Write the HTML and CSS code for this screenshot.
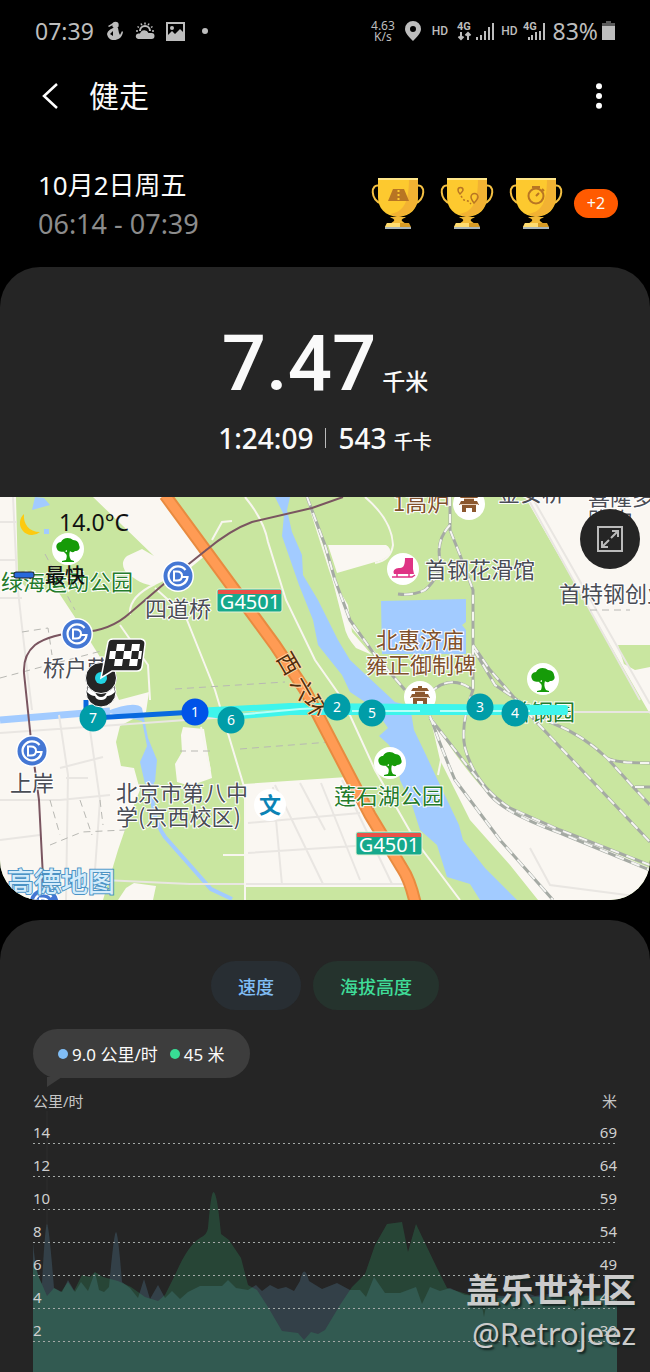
FILE: index.html
```html
<!DOCTYPE html>
<html lang="zh-CN">
<head>
<meta charset="utf-8">
<meta name="viewport" content="width=device-width, initial-scale=1">
<title>健走</title>
<link rel="stylesheet" href="styles.css">
</head>
<body>
<div class="status">
  <span class="status-time">07:39</span>
  <svg class="status-figure" width="18" height="20" viewBox="0 0 18 20" fill="currentColor"><circle cx="9.500" cy="4" r="3.200"/><path d="M2 5l5-3v2L3 6z"/><path d="M7 7l5 0 1 5 1 2 2-4 1 1c-1 6-5 8-9 8S2 17 1 13c1-3 2-4 6-6zM4 13l3 2V10z" fill-rule="evenodd"/></svg>
  <svg class="status-sun" width="20" height="18" viewBox="0 0 20 18" fill="currentColor"><path d="M3 17a2.800 2.800 0 0 1 0-5.500h2a4.500 4.500 0 0 1 8.500-.5h3a3 3 0 0 1 0 6z"/><path d="M5 9a5 5 0 0 1 10 0" fill="none" stroke="currentColor" stroke-width="2"/><path d="M1 9h2M2.500 4.500l1.500 1M6 1.500l.8 1.800M10 .5v2M14 1.500l-.8 1.800M17.500 4.500l-1.500 1M19 9h-2" stroke="currentColor" stroke-width="1.500"/></svg>
  <svg class="status-photo" width="19" height="19" viewBox="0 0 19 19"><rect x="1" y="1" width="17" height="17" fill="none" stroke="currentColor" stroke-width="2"/><circle cx="6" cy="6" r="2" fill="currentColor"/><path d="M2 17v-4l4-4 3 3 5-5 4 4v7z" fill="currentColor"/></svg>
  <span class="status-dot"></span>
  <span class="status-rate">4.63<br>K/s</span>
  <svg class="status-pin" width="16" height="20" viewBox="0 0 16 20"><path d="M8 0a8 8 0 0 1 8 8c0 4-4 8-8 12C4 16 0 12 0 8a8 8 0 0 1 8-8zm0 5a3 3 0 1 0 0 6 3 3 0 0 0 0-6z" fill="currentColor"/></svg>
  <span class="status-hd">HD</span>
  <svg class="status-signal" width="37" height="20" viewBox="0 0 37 20"><text x="0" y="9" class="net">4G</text><path d="M4 11v7M1.500 15.500L4 18l2.500-2.500M11 19v-7M8.500 14.500L11 12l2.500 2.500" class="arrows"/><path d="M20 19v-3M24 19v-5M28 19v-9M32 19V6M36 19V2" class="bars"/></svg>
  <span class="status-hd status-hd-second">HD</span>
  <svg class="status-signal status-signal-second" width="22" height="20" viewBox="0 0 22 20"><text x="0" y="9" class="net">4G</text><path d="M6 19v-3M9 19v-5M13 19v-8M17 19v-9M21 19V2" class="bars"/></svg>
  <span class="status-battery-text">83%</span>
  <svg width="13" height="20" viewBox="0 0 13 20"><path d="M4 0h5v2h4v4H0V2h4z" fill="#5a5a5a"/><path d="M0 5h13v14H0z" fill="currentColor"/></svg>
</div>

<header class="titlebar">
  <button class="icon-button" aria-label="返回"><svg width="18" height="26" viewBox="0 0 18 26"><path d="M16 1L3 13l13 12" fill="none" stroke="#fff" stroke-width="2.500"/></svg></button>
  <h1>健走</h1>
  <button class="icon-button more" aria-label="更多"><svg width="8" height="26" viewBox="0 0 8 26" fill="#fff"><circle cx="4" cy="3.200" r="3"/><circle cx="4" cy="13" r="3"/><circle cx="4" cy="22.800" r="3"/></svg></button>
</header>

<svg width="0" height="0" class="defs" aria-hidden="true">
  <defs>
    <g id="cup">
      <path d="M9 9C-1 5-1 24 11 27M45 9c10-4 10 15-2 18" fill="none" stroke="#f4c043" stroke-width="2"/>
      <path d="M7 1h40v19c0 12-8 19-20 20C14 39 7 31 7 20z" fill="#fdc92f"/>
      <path d="M38 1h9v18c0 12-8 19-20 21-3-1-6-2-8-3 14-2 19-12 19-36z" fill="#f2b233"/>
      <path d="M7 1h40v2H7z" fill="#ffe68a"/>
      <path d="M19 40h16c-3 2-5 2-4 4l4 3H19l4-3c1-2-1-2-4-4z" fill="#f2b936"/>
      <path d="M16 46h22l2 4H14z" fill="#d79b25"/><path d="M16 46h13v4H14z" fill="#ffdc70"/><path d="M14 50h26v2H14z" fill="#a9b5ba"/>
    </g>
    <g id="metro"><circle r="16" fill="#fff"/><circle r="14.500" fill="#4477d4"/><path d="M7.500-6A9.500 9.500 0 1 0 9.500 1H4" fill="none" stroke="#fff" stroke-width="2.200"/><path d="M-4-4.500v9h3q5 0 5-4.500t-5-4.500z" fill="none" stroke="#fff" stroke-width="2"/></g>
    <g id="tree"><circle r="16" fill="#fff"/><path d="M-11 0c-2-4 1-7 4-7 2-5 9-5 12-2 4 0 6 3 6 5 2 4-1 6-4 6-2 2-4 1-5 0-1 3-1 6 1 9l3 1v1H-6v-1l4-1c1-3 1-5 0-6l-4-4 5 2V1c-4 3-9 2-10-1z" fill="#169b08"/></g>
    <g id="pagoda"><circle r="16" fill="#fff"/><path d="M-2-11h4v2h5l2 3H-9l2-3h5zM-5-6H5v3H-5zM-8-3H8l2 4H-10zM-7 1H7v7H3V4H-3v4H-7z" fill="#8b572e"/><path d="M-5-5.500H5M-9 .5H9" stroke="#e5cdb8" stroke-width="1"/></g>
  </defs>
</svg>

<section class="session">
  <div class="session-when">
    <p class="session-date">10月2日周五</p>
    <p class="session-span">06:14 - 07:39</p>
  </div>
  <div class="awards">
    <svg width="54" height="52" viewBox="0 0 54 52"><use href="#cup"/><path d="M22 12h11l5 12H17z" fill="#b87523"/><path d="M27.500 13v2M27.500 17v2M27.500 21v2" stroke="#fdc92f" stroke-width="2"/></svg>
    <svg width="54" height="52" viewBox="0 0 54 52"><use href="#cup"/><g fill="none" stroke="#b87523" stroke-width="1.500"><path d="M20 17c-2-2-2-3-2-4a2 2 0 0 1 5 0c0 1-1 2-3 4zM34 26c-3-4-3-5-3-6a3 3 0 0 1 7 0c0 1-1 3-4 6z"/><path d="M21 19l3 4 4 1 3 3" stroke-dasharray="2 2"/></g></svg>
    <svg width="54" height="52" viewBox="0 0 54 52"><use href="#cup"/><g fill="none" stroke="#b87523" stroke-width="2"><circle cx="27" cy="19" r="7.500"/><path d="M23 10h8M27 10v2M27 19l3-3M33 12l2 2"/></g></svg>
    <button class="awards-more">+2</button>
  </div>
</section>

<main>
<section class="card route">
  <div class="totals">
    <p class="distance"><span class="distance-value">7.47</span><span class="distance-unit">千米</span></p>
    <p class="effort"><span>1:24:09</span><span class="effort-rule"></span><span>543 <small>千卡</small></span></p>
  </div>
  <div class="map">
    <svg class="map-art" viewBox="0 497 650 403" role="img" aria-label="健走路线地图">
      <rect y="497" width="650" height="403" fill="#c9e6a0"/>
      <g class="land">
        <path d="M0 497H16L18 578 28 590H57L80 625 100 657 119 700 149 692 146 712 120 726 116 742 121 766 134 768 140 790 130 815 118 850 103 900H0z"/>
        <path d="M93 497H165L206 555 189 569 155 585Q143 587 125 571 120 562 127 556L142 549 154 556z"/>
        <path d="M328 545H386Q391 547 390 555L382 560 337 573zM332 578L348 605 352 632 372 655 356 648Q346 637 344 625z"/>
        <path d="M525 497H650V645L618 645 624 664 635 670 650 667V714z"/>
        <path d="M430 716Q470 780 500 805L560 830 650 868V900H538L510 865 470 820 440 760z"/>
        <path d="M244 784L347 777 407 887H244z"/>
        <path d="M183 727L204 729 212 778 190 786 177 782 175 764 182 752 181 735z"/>
        <path d="M126 888l8-5 22 3-3 14h-35z"/>
      </g>
      <g class="water">
        <path d="M275 497H290L287 510 292 532 302 555 303 575 318 600 338 640 350 660 395 702 410 706 414 730 426 755 440 785 459 825 463 840 485 868 517 900H480L470 884 447 877 437 845 420 830 412 805 400 780 397 755 388 744 379 736 388 728 374 708 350 692 342 675 318 645 313 620 299 585 282 536 284 515z"/>
        <path d="M381 601L466 599V622l-4 3 4 5V654H382z"/>
        <path d="M105 712Q135 700 142 708L148 738 157 760 155 782 145 784 140 762 147 746 142 721z"/>
        <path d="M35 497L44 498 50 505 32 510zM44 529h5v5h-5z"/>
      </g>
      <path class="stream" d="M0 720L110 711"/>
      <path class="stream thin" d="M152 780Q150 816 165 837L211 889 232 899"/>
      <g class="road faint">
        <path d="M0 522H17M0 560H17M0 598H22M13 497L17 580Q22 630 32 710M0 733L130 724 300 712M59 715L68 775 66 900M90 730L100 800 95 870M0 800H60L110 795M0 840L40 835M60 768L103 757M66 778H88M248 823L360 813M248 853L370 845M245 884H405M275 785L323 884M300 783L325 830M321 783L360 880M342 780L392 884M273 787L282 885"/>
        <path d="M103 880L190 884H245M527 497L640 700M532 497L650 704M565 712H650M530 848L550 885 650 898"/>
      </g>
      <g class="road">
        <path d="M245 497Q264 520 268 542L286 600 315 660 343 700 375 770 415 840 460 900M155 588L185 615 215 690 245 790V900M120 625L148 665 150 700M130 615Q128 597 155 584M212 540L222 522 232 521M365 497Q392 520 393 545 391 560 375 563M223 855H248M201 727L210 770M307 497L330 570 348 622 372 650 405 690M430 716L445 740 438 775"/>
      </g>
      <g class="track">
        <path d="M45 554L75 610M0 678L105 650M22 632L48 628 52 655M175 689L285 682M210 751H180M240 749L330 742M50 800L60 835M80 800L92 835M50 845L82 832 125 830M100 800L103 825M590 610H630"/>
      </g>
      <g class="rail-base">
        <path id="r1" d="M307 497L325 545 335 580 350 620 375 655 405 690"/>
        <path id="r2" d="M450 497L450 530 460 555 473 590V690Q460 725 465 748 475 785 510 808L560 830 650 865"/>
        <path id="r3" d="M473 645L490 670 525 710 650 842"/>
        <path id="r4" d="M474 650L495 685 550 722Q583 735 607 758L635 789 650 805M607 758Q615 763 650 763M635 787H650"/>
        <path id="r5" d="M430 718L455 750 490 795Q505 813 560 833L650 870"/>
        <path id="r6" d="M430 716Q442 750 455 780L500 840 553 900M430 693Q450 673 473 690M450 525Q436 540 440 560 440 577 425 590 412 596 398 594"/>
      </g>
      <g class="rail-dash"><use href="#r1"/><use href="#r2"/><use href="#r3"/><use href="#r4"/><use href="#r5"/><use href="#r6"/></g>
      <path class="highway-edge" d="M165 495L275 645 305 690 370 815 402 868Q410 880 415 902"/>
      <path class="highway" d="M165 495L275 645 305 690 370 815 402 868Q410 880 415 902"/>
      <path class="metro-line" d="M343 497L312 508 252 522Q230 530 205 551L165 583 130 613Q110 631 82 632 50 634 35 645 23 655 24 673L31 740 39 800 44 897"/>

      <g class="shield"><rect x="217" y="589" width="65" height="23" rx="2"/><path d="M218 590h63v4h-63z"/><text x="250" y="609">G4501</text></g>
      <g class="shield"><rect x="356" y="832" width="66" height="23" rx="2"/><path d="M357 833h64v4h-64z"/><text x="389" y="852">G4501</text></g>

      <g class="label">
        <text x="145" y="617">四道桥</text><text x="43" y="676">桥户营</text><text x="10" y="791">上岸</text>
        <text x="425" y="578">首钢花滑馆</text><text x="559" y="602">首特钢创业</text>
        <text x="116" y="801">北京市第八中</text><text x="116" y="825">学(京西校区)</text>
        <text x="498" y="501">金安桥</text><text x="588" y="505">喜隆多</text><text x="588" y="528">购物</text>
      </g>
      <g class="label green"><text x="1" y="590">绿海运动公园</text><text x="334" y="804">莲石湖公园</text><text x="509" y="720">首钢园</text></g>
      <g class="label brown"><text x="393" y="511">1高炉</text><text x="376" y="648">北惠济庙</text><text x="366" y="673">雍正御制碑</text></g>
      <use href="#metro" x="178" y="576"/><use href="#metro" x="77" y="634"/><use href="#metro" x="32" y="751"/><use href="#metro" x="44" y="903"/>
      <use href="#tree" x="68" y="549"/><use href="#tree" x="543" y="679"/><use href="#tree" x="390" y="763"/>
      <use href="#pagoda" x="469" y="504"/><use href="#pagoda" x="420" y="697"/>
      <circle cx="403" cy="569" r="16" fill="#fff"/><path d="M405 558h8v11l1 5h-20c-2-5 3-6 6-6 4 0 5-4 5-10z" fill="#df3385"/><path d="M392 577h20l3-2M397 574v3M409 574v3" fill="none" stroke="#df3385" stroke-width="1.500"/>
      <circle cx="270" cy="805" r="16" fill="#fff"/><text class="school" x="270" y="813">文</text>
      <text class="brand" x="7" y="892">高德地图</text>

      <path class="path-blue" d="M86 700V716M93 718L195 712"/>
      <path class="path-cyan" d="M195 712L230 717 290 712H565"/><path class="path-cyan" d="M195 711L290 706 565 708"/>
      <path class="path-glow" d="M236 715L300 709 340 707M352 711H420M440 711H530"/>
      <g class="label road-name"><text transform="translate(276 658) rotate(60)">西</text><text transform="translate(290 683) rotate(60)">六</text><text transform="translate(303 701) rotate(60)">环</text></g>
      <g class="km">
        <circle cx="93" cy="718" r="13.500"/><text x="93" y="723">7</text>
        <circle class="first" cx="195" cy="712" r="13.500"/><text x="195" y="717">1</text>
        <circle cx="231" cy="720" r="13.500"/><text x="231" y="725">6</text>
        <circle cx="337" cy="707" r="13.500"/><text x="337" y="712">2</text>
        <circle cx="372" cy="713" r="13.500"/><text x="372" y="718">5</text>
        <circle cx="480" cy="707" r="13.500"/><text x="480" y="712">3</text>
        <circle cx="515" cy="713" r="13.500"/><text x="515" y="718">4</text>
      </g>
      <circle cx="101" cy="692" r="15" fill="#252525" stroke="#fff"/><path d="M88 687q13 12 26 0l1 5q-4 4-8 4-1 4-6 4t-6-4q-4 0-8-4z" fill="#fff"/><path d="M95 692h12q-2 5-6 5t-6-5z" fill="#252525"/>
      <circle cx="101" cy="678" r="15.500" fill="#252525" stroke="#fff"/>
      <circle cx="101" cy="678" r="6" fill="#22d3e2"/>
      <path d="M101 678L108 642Q109 639 113 639H141Q146 640 145 645L142 667Q141 671 137 671H112z" fill="#252525" stroke="#fff" stroke-width="1.500"/>
      <path d="M117 644h8l-1 7h-8zM132 644h8l-1 7h-8zM124 651h8l-1 8h-8zM110 651h6l-1 8h-6zM139 651h3l-1 8h-3zM115 659h8l-1 7h-8zM130 659h8l-1 7h-8z" fill="#fff"/>
      <rect x="14" y="572" width="20" height="6" rx="2" fill="#2869dc" stroke="#222"/>
      <text class="fastest" x="45" y="583">最快</text>
      <path d="M24 514a12 12 0 1 0 16 18C29 532 23 524 24 514z" fill="#fdca10"/>
      <text class="temp" x="59" y="531">14.0°C</text>
    </svg>
    <button class="map-expand" aria-label="展开地图"><svg width="28" height="28" viewBox="0 0 28 28" fill="none" stroke="#bbb" stroke-width="2"><path d="M2 2h24v24H2z"/><path d="M15 13l7-7M16 6h6v6M13 15l-7 7M6 16v6h6"/></svg></button>
  </div>
</section>

<section class="card chart-card">
  <div class="series">
    <button class="series-speed">速度</button>
    <button class="series-height">海拔高度</button>
  </div>
  <div class="bubble"><span class="dot dot-speed"></span>9.0 公里/时<span class="dot dot-height"></span>45 米</div>
  <div class="axis-units"><span>公里/时</span><span>米</span></div>
  <div class="plot">
    <svg class="plot-areas" viewBox="33 1111 584 261" preserveAspectRatio="none" aria-hidden="true">
      <path d="M47 1111V1226" stroke="#2f2f2f" stroke-width="1"/>
      <path class="area-speed" d="M33 1243Q36 1275 42 1284 45 1225 47 1224 49 1225 54 1288L62 1292 68 1280 75 1292 81 1282 88 1291 95 1272 99 1290 104 1292 109 1287Q114 1232 116 1232 118 1232 122 1282L130 1288 138 1298 144 1279 150 1299 158 1285 165 1298 172 1291 180 1299 188 1292 200 1286 222 1286 228 1280 236 1288 248 1290 256 1285 262 1291 270 1285 278 1289 286 1287 294 1291 300 1281Q304 1262 309 1281L322 1289 337 1283 350 1290H360L366 1297 374 1277 385 1293 400 1293 416 1287 422 1304 430 1287 440 1291 450 1288 465 1295 480 1296 484 1317 488 1295 505 1296 520 1290 535 1296 555 1293 575 1311 590 1297 617 1295V1372H33z"/>
      <path class="area-height" d="M33 1260L38 1275 47 1296 54 1288 61 1292 68 1282 74 1291 82 1275 90 1277 95 1272 103 1277 118 1281 131 1287 145 1297 158 1301 165 1295 175 1275Q188 1245 200 1238 207 1235 208 1228 211 1192 213.500 1192 217 1192 221 1234L229 1240 241 1258 248 1285 257 1290 268 1307 282 1331 298 1333 304 1340 311 1332 318 1334 325 1330 340 1305 352 1287 365 1274 375 1245 387 1224 402 1222 408 1252 416 1224 425 1243 437 1268 447 1288 470 1295 490 1298 617 1295V1372H33z"/>
    </svg>
    <div class="grid-row"><span>14</span><span>69</span></div>
    <div class="grid-row"><span>12</span><span>64</span></div>
    <div class="grid-row"><span>10</span><span>59</span></div>
    <div class="grid-row"><span>8</span><span>54</span></div>
    <div class="grid-row"><span>6</span><span>49</span></div>
    <div class="grid-row"><span>4</span><span>44</span></div>
    <div class="grid-row"><span>2</span><span>39</span></div>
  </div>
  <div class="watermark"><strong>盖乐世社区</strong><span>@Retrojeez</span></div>
</section>
</main>
</body>
</html>
```
FILE: styles.css
```css
* { box-sizing: border-box; }
body { margin: 0; background: #000; color: #fafafa; font-family: "Noto Sans", "Noto Sans CJK SC", sans-serif; }
p, h1 { margin: 0; font-weight: 400; }
button { border: 0; padding: 0; font: inherit; color: inherit; background: none; }
svg { flex: none; }
.defs { position: absolute; }

.status { display: flex; align-items: center; height: 62px; padding: 0 35px; color: #bdbdbd; white-space: nowrap; }
.status-time { font-size: 23px; }
.status-figure { margin-left: 12px; }
.status-sun { margin-left: 11px; }
.status-photo { margin-left: 11px; }
.status-dot { width: 6px; height: 6px; margin-left: 17px; border-radius: 50%; background: currentColor; }
.status-rate { margin-left: auto; font-size: 12px; line-height: 11px; text-align: center; }
.status-pin { margin-left: 10px; }
.status-hd { margin-left: 11px; font: 500 12px Roboto, sans-serif; }
.status-signal { margin-left: 9px; overflow: visible; }
.status-hd-second { margin-left: 7px; }
.status-signal-second { margin-left: 5px; }
.net { font: 700 11px Roboto, sans-serif; fill: currentColor; }
.arrows { fill: none; stroke: currentColor; stroke-width: 2; }
.bars { stroke: currentColor; stroke-width: 2; }
.status-battery-text { margin: 0 4px 0 8px; font-size: 23px; }

.titlebar { display: flex; align-items: center; height: 68px; padding: 0 47px 0 41px; }
.titlebar h1 { margin-left: 30px; font-size: 30px; line-height: 40px; }
.icon-button { display: flex; }
.more { margin-left: auto; }

.session { display: flex; justify-content: space-between; align-items: flex-start; padding: 35px 32px 24px 38px; }
.session-date { font-size: 26px; line-height: 40px; }
.session-span { font-size: 27px; line-height: 38px; color: #8c8c8c; }
.awards { display: flex; align-items: center; gap: 15px; padding-top: 12px; }
.awards-more { width: 44px; height: 29px; margin-left: -4px; border-radius: 15px; background: #ff5a00; font-size: 16px; line-height: 29px; }

.card { background: #252525; overflow: hidden; }
.route { border-radius: 40px; }
.totals { padding-top: 52px; text-align: center; }
.distance { display: flex; justify-content: center; align-items: baseline; gap: 6px; height: 96px; }
.distance-value { font: 500 78px/90px Roboto, sans-serif; }
.distance-unit { font-size: 23px; font-weight: 500; line-height: 30px; }
.effort { display: flex; justify-content: center; align-items: center; height: 82px; padding-bottom: 36px; font-size: 28px; font-weight: 500; }
.effort-rule { width: 1px; height: 20px; margin: 0 12px; background: #bbb; }
.effort small { font-size: 19px; }

.map { position: relative; }
.map-art { display: block; width: 100%; height: auto; }
.map-expand { position: absolute; top: 12px; right: 10px; display: flex; align-items: center; justify-content: center; width: 60px; height: 60px; border-radius: 50%; background: #252525; }
.land { fill: #faf7f2; }
.water { fill: #a2cbff; }
.stream { fill: none; stroke: #a2cbff; stroke-width: 7; }
.thin { stroke-width: 4; }
.road { fill: none; stroke: #f8f6ef; stroke-width: 2; }
.faint { stroke: #e9e6e2; stroke-width: 2; }
.track { fill: none; stroke: #b8b8b3; stroke-width: 1; stroke-dasharray: 7 5; }
.rail-base { fill: none; stroke: #a5aaa4; stroke-width: 3; }
.rail-dash { fill: none; stroke: #f5f5f2; stroke-width: 2; stroke-dasharray: 9 8; }
.rail-dash use { fill: none; }
.rail-base path { stroke: inherit; }
.rail-dash { mix-blend-mode: normal; }
.highway-edge { fill: none; stroke: #e88b40; stroke-width: 13; }
.highway { fill: none; stroke: #ff9b54; stroke-width: 9; }
.metro-line { fill: none; stroke: #7a5560; stroke-width: 2; }
.label { font-family: "Noto Sans CJK SC", sans-serif; font-size: 22px; font-weight: 400; fill: #4a4d55; stroke: #fff; stroke-width: 2; paint-order: stroke; }
.green { fill: #247b2b; }
.brown { fill: #80512c; }
.road-name { fill: #4f2d0c; stroke: #ffd7a5; }
.shield rect { fill: #16a98c; stroke: #e7f2d5; }
.shield path { fill: #ea5148; }
.shield text { font-size: 20px; fill: #fff; text-anchor: middle; }
.school { font-size: 22px; font-weight: 700; fill: #0b83b5; text-anchor: middle; }
.brand { font-size: 27px; font-weight: 500; fill: #d5ecfb; stroke: #4c93c5; stroke-width: 2; paint-order: stroke; }
.path-blue { fill: none; stroke: #0869df; stroke-width: 5; }
.path-cyan { fill: none; stroke: #3ef5ec; stroke-width: 6; stroke-linecap: round; }
.path-glow { fill: none; stroke: #b7fff8; stroke-width: 2; }
.km circle { fill: #009da8; }
.km .first { fill: #0053e8; }
.km text { font-size: 14px; fill: #fff; text-anchor: middle; }
.fastest { font-size: 20px; font-weight: 500; fill: #111; }
.temp { font-size: 23px; fill: #111; }

.chart-card { position: relative; margin-top: 20px; padding: 41px 33px 0; border-radius: 40px 40px 0 0; }
.series { display: flex; justify-content: center; gap: 12px; }
.series button { height: 49px; padding: 0 27px; border-radius: 25px; font-size: 18px; font-weight: 500; }
.series .series-speed { background: #282e33; color: #80bdf5; }
.series .series-height { background: #25332d; color: #3fdc98; }
.bubble { position: relative; display: flex; align-items: center; width: fit-content; height: 49px; margin-top: 19px; padding: 0 25px; border-radius: 25px; background: #3d3d3d; font-size: 17px; }
.bubble::after { content: ""; position: absolute; top: 48px; left: 14px; border-top: 10px solid #3d3d3d; border-right: 15px solid transparent; }
.dot { width: 10px; height: 10px; margin-right: 4px; border-radius: 50%; }
.dot-speed { background: #80bdf5; }
.dot-height { margin-left: 12px; background: #38dc95; }
.axis-units { display: flex; justify-content: space-between; height: 33px; padding-top: 12px; font-size: 15px; line-height: 22px; color: #c5c5c5; }
.plot { position: relative; height: 261px; }
.plot-areas { position: absolute; inset: 0; width: 100%; height: 100%; }
.area-speed { fill: rgb(115 187 231 / 18%); }
.area-height { fill: rgb(49 169 109 / 25%); }
.grid-row { position: relative; display: flex; justify-content: space-between; height: 33px; padding-top: 10px; font-size: 15px; line-height: 22px; color: #d0d0d0; background: repeating-linear-gradient(90deg, #a5aaa8 0 2px, transparent 2px 5px) bottom / 100% 1px no-repeat; }
.watermark { position: absolute; right: 14px; bottom: 18px; display: flex; flex-direction: column; align-items: flex-end; color: #cbcbcb; text-shadow: 2px 2px 2px #152421; }
.watermark strong { font-size: 34px; line-height: 44px; }
.watermark span { font-size: 31px; line-height: 42px; }
```
